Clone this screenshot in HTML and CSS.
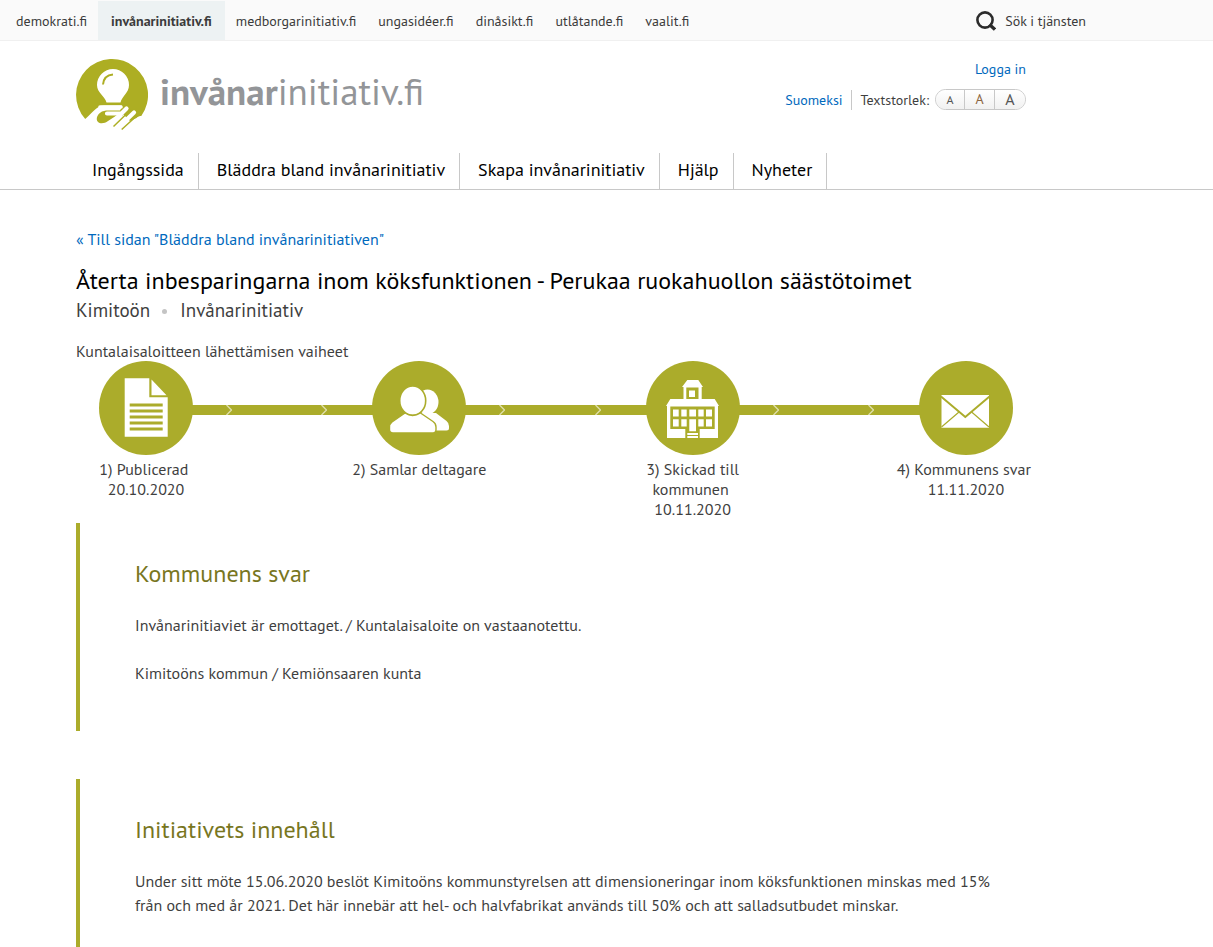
FILE: index.html
```html
<!DOCTYPE html>
<html lang="sv">
<head>
<meta charset="utf-8">
<title>Återta inbesparingarna inom köksfunktionen - invånarinitiativ.fi</title>
<link rel="stylesheet" href="styles.css">
</head>
<body>
<div class="topbar">
  <nav class="sites" aria-label="Tjänster">
    <a href="#">demokrati.fi</a>
    <a href="#" class="active">invånarinitiativ.fi</a>
    <a href="#">medborgarinitiativ.fi</a>
    <a href="#">ungasidéer.fi</a>
    <a href="#">dinåsikt.fi</a>
    <a href="#">utlåtande.fi</a>
    <a href="#">vaalit.fi</a>
  </nav>
  <a href="#" class="search">
    <svg width="20" height="20" viewBox="0 0 20 20" aria-hidden="true"><circle cx="9" cy="9" r="7.6" fill="none" stroke="#2b2b2b" stroke-width="2.6"/><path d="M13.5 13.5L19 18.6" stroke="#2b2b2b" stroke-width="3.4"/></svg>
    <span>Sök i tjänsten</span>
  </a>
</div>

<header class="header">
  <div class="wrap masthead">
    <a href="#" class="logo">
      <svg width="72" height="72" viewBox="0 0 72 72" aria-hidden="true">
        <path d="M9.2 60A36 36 0 1 1 65.300 57C63.500 57 62 57.500 60.500 59L54 62L44 52L46 46.500H28C21 46.500 17 53 9.200 60Z" fill="#adae23"/>
        <path d="M30.500 43.500C29 37 21 34 21 26A16 16 0 0 1 53 26C53 34 46 37 44.500 43.500Z" fill="#fff"/>
        <path d="M27 25.500C27.500 20 31 16 37 15.500" fill="none" stroke="#adae23" stroke-width="2"/>
        <path d="M24 48H45" fill="none" stroke="#fff" stroke-width="3.600" stroke-linecap="round"/>
        <path d="M26 52.500L30 51.500H47L49 54L46 57H39.700L32 62C29 64.500 24 65 22 63C19 59.500 22 54.500 26 52.500Z" fill="#adae23"/>
        <path d="M31 54.500H44M34 66L50.500 49.500M42 69L58 53.500" fill="none" stroke="#fff" stroke-width="4.200" stroke-linecap="round"/>
        <path d="M37.500 67.500L54.500 51M45.700 70.500L60.500 57" fill="none" stroke="#adae23" stroke-width="1.500"/>
      </svg>
      <span class="wordmark"><b>invånar</b>initiativ.fi</span>
    </a>
    <div class="tools">
      <a href="#">Logga in</a>
      <div class="toolrow">
        <a href="#" class="lang">Suomeksi</a>
        <span class="sizelabel" id="size-label">Textstorlek:</span>
        <div class="sizes" role="group" aria-labelledby="size-label">
          <button type="button" class="small">A</button>
          <button type="button" class="medium">A</button>
          <button type="button" class="large">A</button>
        </div>
      </div>
    </div>
  </div>
  <nav class="wrap mainnav" aria-label="Huvudmeny">
    <a href="#">Ingångssida</a>
    <a href="#">Bläddra bland invånarinitiativ</a>
    <a href="#">Skapa invånarinitiativ</a>
    <a href="#">Hjälp</a>
    <a href="#">Nyheter</a>
  </nav>
</header>

<main class="wrap content">
  <a href="#" class="back">« Till sidan "Bläddra bland invånarinitiativen"</a>
  <h1>Återta inbesparingarna inom köksfunktionen - Perukaa ruokahuollon säästötoimet</h1>
  <p class="meta"><span>Kimitoön</span><span class="dot"></span><span>Invånarinitiativ</span></p>
  <p class="caption">Kuntalaisaloitteen lähettämisen vaiheet</p>

  <div class="steps">
    <div class="step">
      <svg width="94" height="94" viewBox="0 0 94 94" aria-hidden="true">
        <circle cx="47" cy="47" r="47" fill="#abac2b"/>
        <path d="M25.700 17.300H50.300V36.300H68.700V75.700H25.700Z" fill="#fff"/>
        <path d="M52.500 18.500L67.500 34.300H52.500Z" fill="#fff"/>
        <path d="M30.700 44H63.700M30.700 50H63.700M30.700 56H63.700M30.700 62H63.700M30.700 68H63.700" stroke="#abac2b" stroke-width="2.800"/>
      </svg>
      <p>1) Publicerad&nbsp;<br>20.10.2020</p>
    </div>
    <div class="link" aria-hidden="true">
      <svg width="6" height="10" viewBox="0 0 6 10"><path d="M.5 0L5.500 5L.5 10"/></svg>
      <svg width="6" height="10" viewBox="0 0 6 10"><path d="M.5 0L5.500 5L.5 10"/></svg>
    </div>
    <div class="step">
      <svg width="94" height="94" viewBox="0 0 94 94" aria-hidden="true">
        <circle cx="47" cy="47" r="47" fill="#abac2b"/>
        <ellipse cx="55.500" cy="41" rx="11" ry="12.500" fill="#fff"/>
        <path d="M48 52H64L74.500 60Q77 62 77 65V67Q77 69.500 74.500 69.500H48Z" fill="#fff"/>
        <ellipse cx="40.700" cy="39.700" rx="13" ry="14.700" fill="#fff" stroke="#abac2b" stroke-width="1.600"/>
        <path d="M33 52Q40.500 57 48.500 52L61 60.500Q64 62.500 64 66V68.500Q64 72 61 72H21Q17.500 72 17.500 68.500V66Q17.500 63 20 61Z" fill="#fff" stroke="#abac2b" stroke-width="1.400"/>
      </svg>
      <p>2) Samlar deltagare</p>
    </div>
    <div class="link" aria-hidden="true">
      <svg width="6" height="10" viewBox="0 0 6 10"><path d="M.5 0L5.500 5L.5 10"/></svg>
      <svg width="6" height="10" viewBox="0 0 6 10"><path d="M.5 0L5.500 5L.5 10"/></svg>
    </div>
    <div class="step">
      <svg width="94" height="94" viewBox="0 0 94 94" aria-hidden="true">
        <circle cx="47" cy="47" r="47" fill="#abac2b"/>
        <path d="M41.300 19H52.300L57 26H55.700V38H68.700L73 45H72V77H21V45H20L24.300 38H37.500V26H36Z" fill="#fff"/>
        <path d="M40.300 26.500H52.500V38H40.300ZM24.300 45.500H68.700V68H53.700V77H39.300V68H24.300Z" fill="#abac2b"/>
        <path d="M43 29.500H49V36H43ZM27 48.500H32.700V55.500H27ZM35.300 48.500H40.700V55.500H35.300ZM43.300 48.500H50V55.500H43.300ZM52.300 48.500H57.700V55.500H52.300ZM60 48.500H66V55.500H60ZM27 58.300H32.700V65.500H27ZM35.300 58.300H40.700V65.500H35.300ZM43.300 58.300H50V70.300H43.300ZM52.300 58.300H57.700V65.500H52.300ZM60 58.300H66V65.500H60ZM41.300 72H52V74H41.300ZM41.300 75H52V77H41.300Z" fill="#fff"/>
      </svg>
      <p>3) Skickad till<br>kommunen&nbsp;<br>10.11.2020</p>
    </div>
    <div class="link" aria-hidden="true">
      <svg width="6" height="10" viewBox="0 0 6 10"><path d="M.5 0L5.500 5L.5 10"/></svg>
      <svg width="6" height="10" viewBox="0 0 6 10"><path d="M.5 0L5.500 5L.5 10"/></svg>
    </div>
    <div class="step">
      <svg width="94" height="94" viewBox="0 0 94 94" aria-hidden="true">
        <circle cx="47" cy="47" r="47" fill="#abac2b"/>
        <path d="M22.500 34H70V66.700H22.500Z" fill="#fff"/>
        <path d="M22 35.500L46.300 56L70.500 35.500" fill="none" stroke="#abac2b" stroke-width="2"/>
        <path d="M40 51L22.500 66M52.600 51L70 66" stroke="#abac2b" stroke-width="1.200"/>
      </svg>
      <p>4) Kommunens svar&nbsp;<br>11.11.2020</p>
    </div>
  </div>

  <section class="panel answer">
    <h2>Kommunens svar</h2>
    <p>Invånarinitiaviet är emottaget. / Kuntalaisaloite on vastaanotettu.</p>
    <p>Kimitoöns kommun / Kemiönsaaren kunta</p>
  </section>

  <section class="panel">
    <h2>Initiativets innehåll</h2>
    <p>Under sitt möte 15.06.2020 beslöt Kimitoöns kommunstyrelsen att dimensioneringar inom köksfunktionen minskas med 15% från och med år 2021. Det här innebär att hel- och halvfabrikat används till 50% och att salladsutbudet minskar.</p>
    <p>På</p>
  </section>
</main>
</body>
</html>
```
FILE: styles.css
```css
* { box-sizing: border-box; }
body {
  margin: 0;
  background: #fff;
  color: #3f3f3f;
  font: 16px/24px "PT Sans", Lato, "Open Sans", sans-serif;
}
h1, h2, p { margin: 0; font-weight: 400; }
a { color: #0069bd; text-decoration: none; }
.wrap { max-width: 1137px; margin-left: 76px; }

.topbar {
  display: flex;
  height: 41px;
  padding: 1px 127px 0 5px;
  justify-content: space-between;
  background: #fafafa;
  border-bottom: 1px solid #f0f0f0;
  font-size: 14px;
  line-height: 20px;
}
.topbar a { color: #3b3b3b; }
.sites { display: flex; }
.sites a { padding: 10px 11px; }
.sites .active { padding: 10px 13px; background: #edf2f3; font-weight: 700; }
.search { display: flex; align-items: center; gap: 9px; }

.header { border-bottom: 1px solid #c8c8c8; }
.masthead {
  display: flex;
  justify-content: space-between;
  max-width: 950px;
  height: 112px;
  padding-top: 18px;
}
.logo { display: flex; gap: 12px; }
.wordmark { color: #939598; font-size: 37px; line-height: 64px; }
.tools {
  display: flex;
  flex-direction: column;
  align-items: flex-end;
  font-size: 14px;
  line-height: 20px;
}
.toolrow { display: flex; align-items: center; margin-top: 10px; }
.lang { padding-right: 8px; border-right: 1px solid #c8c8c8; }
.sizelabel { padding: 0 6px 0 9px; }
.sizes {
  display: flex;
  border: 1px solid #c8c8c8;
  border-radius: 11px;
  overflow: hidden;
}
.sizes button {
  width: 30px;
  height: 19px;
  padding: 0;
  border: 0;
  background: linear-gradient(#fff, #f1f1f1);
  color: #555;
  font-family: inherit;
  line-height: 19px;
}
.sizes button + button { border-left: 1px solid #c8c8c8; }
.sizes .small { width: 28px; font-size: 12px; }
.sizes .medium { font-size: 14px; color: #8a6540; }
.sizes .large { width: 31px; font-size: 16px; }

.mainnav { display: flex; font-size: 18px; line-height: 34px; }
.mainnav a {
  padding: 0 14px 2px 18px;
  border-right: 1px solid #c8c8c8;
  color: #000;
}
.mainnav a:first-child { padding-left: 16px; }

.content { max-width: 960px; padding-top: 37px; }
.back { display: block; }
h1 { margin-top: 13px; color: #000; font-size: 24px; line-height: 34px; }
.meta { display: flex; align-items: center; font-size: 19px; line-height: 24px; }
.dot { width: 5px; height: 5px; margin: 2px 13px 0 12px; border-radius: 50%; background: #c4c4c4; }
.caption { margin-top: 19px; line-height: 20px; }

.steps {
  display: flex;
  background: linear-gradient(#abac2b, #abac2b) no-repeat 70px 44px / calc(100% - 140px) 10px;
}
.step { width: 140px; text-align: center; line-height: 20px; }
.step svg { display: block; margin: 0 auto 4px; }
.link {
  display: flex;
  flex: 1;
  height: 10px;
  margin-top: 44px;
  padding: 0 22px 0 10px;
  justify-content: space-between;
}
.link path { fill: none; stroke: #dfdfaa; stroke-width: 1.4; }

.panel {
  min-height: 208px;
  margin-top: 48px;
  padding: 34px 40px 0 55px;
  border-left: 4px solid #abac2b;
}
.answer { margin-top: 4px; }
.panel h2 { margin-bottom: 22px; color: #78761e; font-size: 24px; line-height: 34px; }
.panel p { margin-bottom: 24px; }
```
